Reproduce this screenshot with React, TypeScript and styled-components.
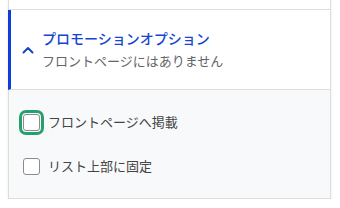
import React from 'react'
import styled, {createGlobalStyle} from 'styled-components'

const GlobalStyle = createGlobalStyle`
  body {
    margin: 0;
    background: #ffffff;
    font-family: "Noto Sans CJK JP", "Noto Sans", sans-serif;
  }
`

type Option = {
  id: string
  label: string
  focused?: boolean
}

const options: Option[] = [
  {id: 'front', label: 'フロントページへ掲載', focused: true},
  {id: 'sticky', label: 'リスト上部に固定'},
]

export default function App() {
  return (
    <>
      <GlobalStyle />
      <Page>
        <Card>
          <PrevItem />
          <Header>
            <Chevron />
            <HeaderText>
              <Title>プロモーションオプション</Title>
              <Summary>フロントページにはありません</Summary>
            </HeaderText>
          </Header>
          <Panel>
            {options.map((option) => (
              <Row key={option.id}>
                <Box type="checkbox" $focused={option.focused} />
                <Label>{option.label}</Label>
              </Row>
            ))}
          </Panel>
        </Card>
      </Page>
    </>
  )
}

function Chevron() {
  return (
    <ChevronIcon width={12} height={8} viewBox="0 0 12 8" fill="none">
      <path
        d="M1.5 6.5L6 2l4.5 4.5"
        stroke="currentColor"
        strokeWidth={2}
        strokeLinecap="round"
        strokeLinejoin="round"
      />
    </ChevronIcon>
  )
}

const Page = styled.div`
  padding-left: 8px;
`

const Card = styled.div`
  width: 323px;
  box-sizing: border-box;
  border: 1px solid #dddddd;
  border-top: 0;
  box-shadow: 0 1px 3px rgba(0, 0, 0, 0.08);
  background: #ffffff;
`

const PrevItem = styled.div`
  height: 9px;
  border-bottom: 1px solid #dddddd;
`

const Header = styled.div`
  height: 79px;
  margin-left: -1px;
  border-left: 3px solid #0b3fd6;
  border-bottom: 1px solid #dddddd;
  padding-left: 11px;
  display: flex;
  align-items: center;
  gap: 8px;
`

const ChevronIcon = styled.svg`
  color: #1446c8;
  flex: none;
  margin-top: 1px;
`

const HeaderText = styled.div`
  display: flex;
  flex-direction: column;
  gap: 3px;
`

const Title = styled.div`
  font-size: 14px;
  line-height: 20px;
  font-weight: 500;
  color: #1446d0;
`

const Summary = styled.div`
  font-size: 13px;
  line-height: 20px;
  color: #666666;
`

const Panel = styled.div`
  background: #f8f9fb;
  padding: 22px 0 22px 14px;
  display: flex;
  flex-direction: column;
  gap: 24px;
`

const Row = styled.label`
  display: flex;
  align-items: center;
  gap: 8px;
  height: 20px;
`

const Box = styled.input<{$focused?: boolean}>`
  appearance: none;
  margin: 0;
  width: 17px;
  height: 17px;
  box-sizing: border-box;
  border: 1px solid #8c8c8c;
  border-radius: 3px;
  background: #ffffff;
  outline: ${(p) => (p.$focused ? '3px solid #27a06c' : 'none')};
  outline-offset: 1px;
`

const Label = styled.span`
  font-size: 13px;
  line-height: 20px;
  color: #444444;
`
